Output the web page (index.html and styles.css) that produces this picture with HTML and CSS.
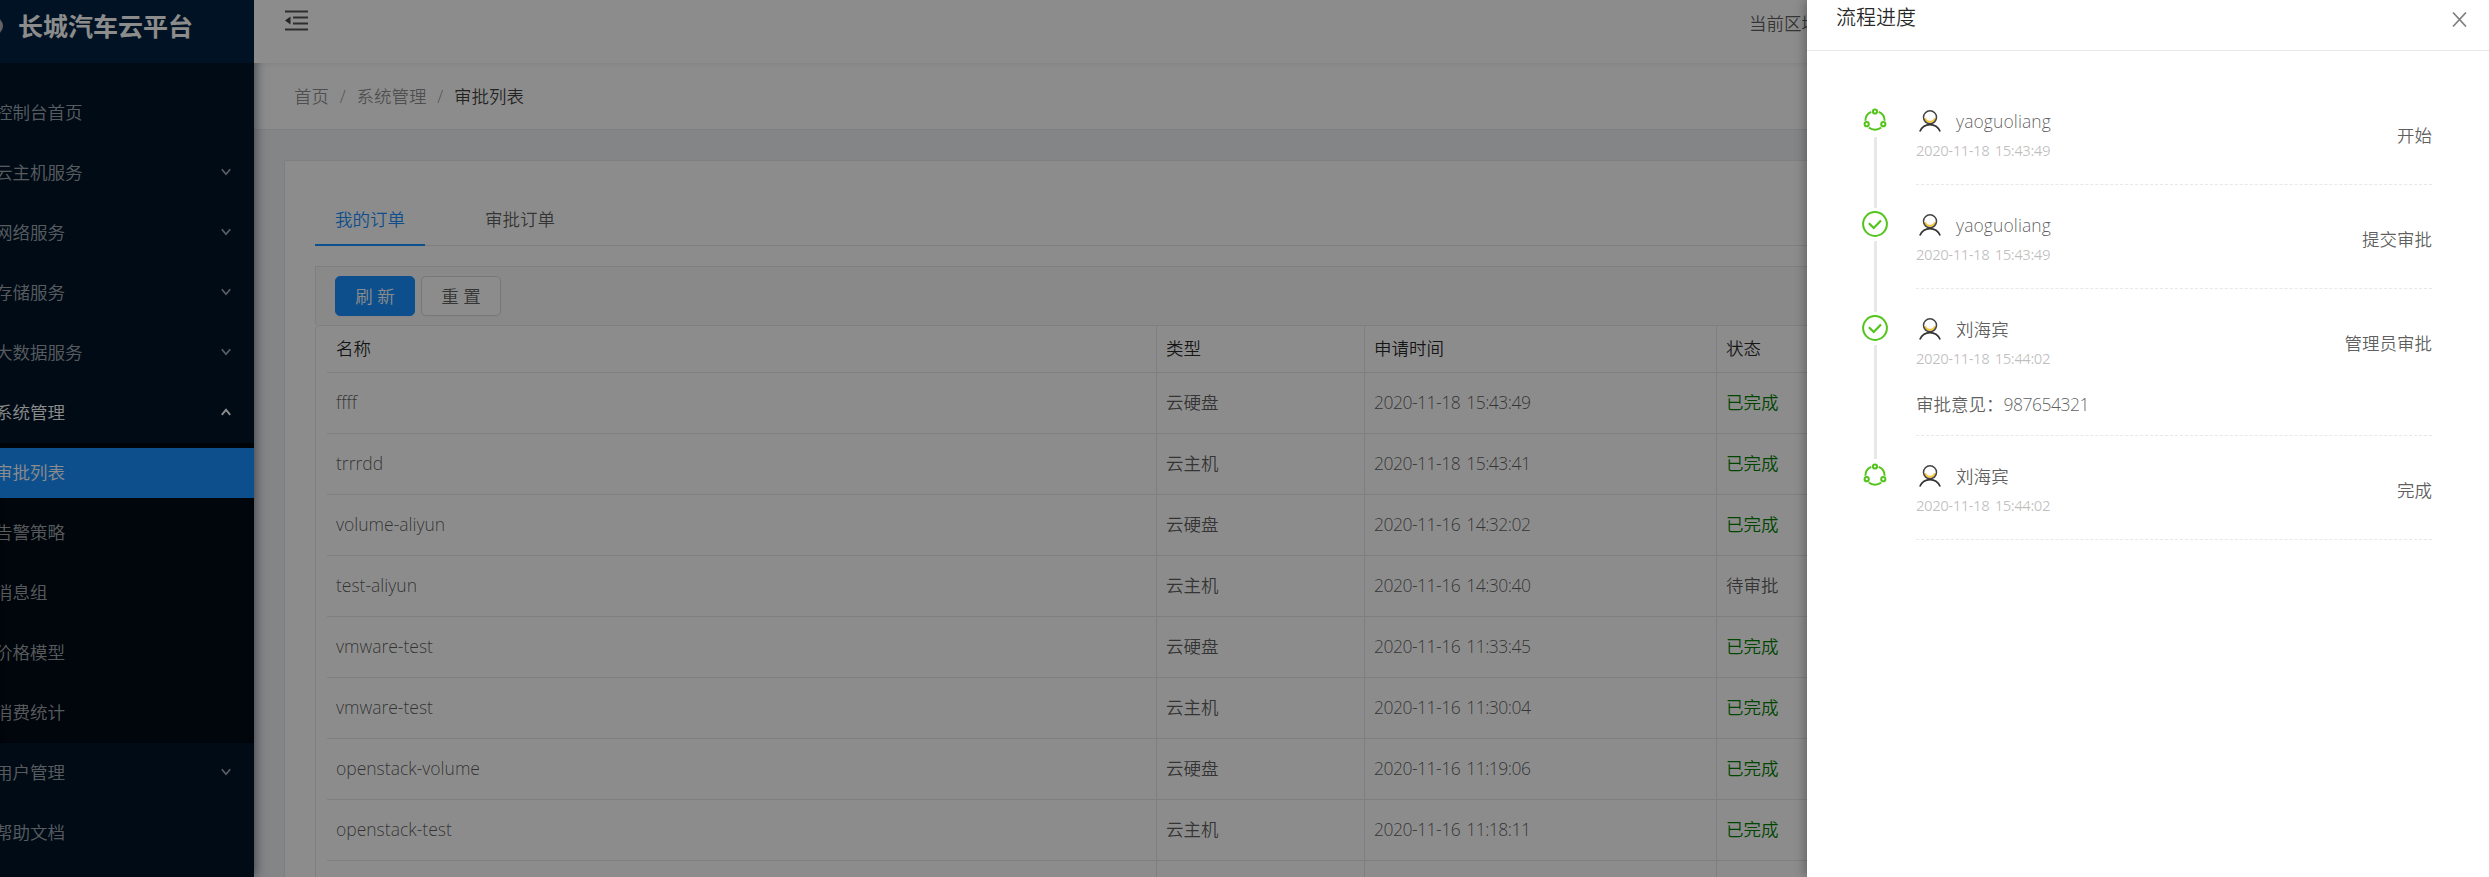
FILE: index.html
```html
<!DOCTYPE html>
<html lang="zh-CN">
<head>
<meta charset="utf-8">
<title>审批列表</title>
<link rel="stylesheet" href="styles.css">
</head>
<body>
<svg class="defs" width="0" height="0" aria-hidden="true">
  <symbol id="down" viewBox="0 0 10 8"><path d="M.8 1.200 5 6.200l4.200-5" fill="none" stroke="currentColor" stroke-width="1.700"/></symbol>
  <symbol id="up" viewBox="0 0 10 8"><path d="M.8 6.800 5 1.800l4.200 5" fill="none" stroke="currentColor" stroke-width="1.900"/></symbol>
  <symbol id="node" viewBox="0 0 26 26">
    <g fill="none" stroke="#52c41a" stroke-width="2"><path d="M9.300 4.900A9.600 9.600 0 0 0 3.400 13.700M16.700 4.900A9.600 9.600 0 0 1 22.600 13.700M6.800 20.600a9.800 9.800 0 0 0 12.400 0"/><circle cx="13" cy="4.500" r="2.100"/><circle cx="4.700" cy="17.200" r="2.100"/><circle cx="21.300" cy="17.200" r="2.100"/></g>
  </symbol>
  <symbol id="check" viewBox="0 0 26 26">
    <g fill="none" stroke="#52c41a"><circle cx="13" cy="13" r="11.900" stroke-width="2"/><path d="M6.900 12.300l4.800 4.700L19 9.400" stroke-width="2.200"/></g>
  </symbol>
  <symbol id="user" viewBox="0 0 22 22">
    <g fill="none"><path d="M6.200 8.200a5 5 0 0 0 9.600 0" stroke="#fcc430" stroke-width="1.900"/><circle cx="11" cy="7.300" r="6.500" stroke="#444" stroke-width="1.500"/><path d="M.8 21.500C3 17 6.500 14.700 11 14.700S19 17 21.200 21.500" stroke="#333" stroke-width="1.700"/></g>
  </symbol>
</svg>
<div class="app">
  <aside class="sider">
    <div class="logo"><span class="logo-mark"></span><h1>长城汽车云平台</h1></div>
    <ul class="menu">
      <li class="item">控制台首页</li>
      <li class="item">云主机服务<svg class="arrow"><use href="#down"/></svg></li>
      <li class="item">网络服务<svg class="arrow"><use href="#down"/></svg></li>
      <li class="item">存储服务<svg class="arrow"><use href="#down"/></svg></li>
      <li class="item">大数据服务<svg class="arrow"><use href="#down"/></svg></li>
      <li class="item open">系统管理<svg class="arrow"><use href="#up"/></svg></li>
      <li>
        <ul class="submenu">
          <li class="item selected">审批列表</li>
          <li class="item">告警策略</li>
          <li class="item">消息组</li>
          <li class="item">价格模型</li>
          <li class="item">消费统计</li>
        </ul>
      </li>
      <li class="item">用户管理<svg class="arrow"><use href="#down"/></svg></li>
      <li class="item">帮助文档</li>
    </ul>
  </aside>
  <div class="main">
    <header class="header">
      <svg class="fold" viewBox="0 0 23 22"><path d="M0 1.500h23M8 7.500h15M8 13.500h15M0 19.500h23" stroke="#555" stroke-width="2"/><path d="M5.500 6.500v8L0 10.500z" fill="#444"/></svg>
      <span class="region">当前区域</span>
    </header>
    <nav class="crumbs"><span>首页</span><i>/</i><span>系统管理</span><i>/</i><b>审批列表</b></nav>
    <section class="card">
      <div class="tabs"><div class="tab active">我的订单</div><div class="tab">审批订单</div></div>
      <div class="toolbar"><button class="btn primary">刷 新</button><button class="btn">重 置</button></div>
      <div class="table">
        <div class="row head"><div>名称</div><div>类型</div><div>申请时间</div><div>状态</div></div>
        <div class="row"><div>ffff</div><div>云硬盘</div><div class="num">2020-11-18 15:43:49</div><div class="done">已完成</div></div>
        <div class="row"><div>trrrdd</div><div>云主机</div><div class="num">2020-11-18 15:43:41</div><div class="done">已完成</div></div>
        <div class="row"><div>volume-aliyun</div><div>云硬盘</div><div class="num">2020-11-16 14:32:02</div><div class="done">已完成</div></div>
        <div class="row"><div>test-aliyun</div><div>云主机</div><div class="num">2020-11-16 14:30:40</div><div>待审批</div></div>
        <div class="row"><div>vmware-test</div><div>云硬盘</div><div class="num">2020-11-16 11:33:45</div><div class="done">已完成</div></div>
        <div class="row"><div>vmware-test</div><div>云主机</div><div class="num">2020-11-16 11:30:04</div><div class="done">已完成</div></div>
        <div class="row"><div>openstack-volume</div><div>云硬盘</div><div class="num">2020-11-16 11:19:06</div><div class="done">已完成</div></div>
        <div class="row"><div>openstack-test</div><div>云主机</div><div class="num">2020-11-16 11:18:11</div><div class="done">已完成</div></div>
        <div class="row"><div></div><div></div><div></div><div></div></div>
      </div>
    </section>
  </div>
</div>
<div class="mask"></div>
<aside class="drawer">
  <div class="drawer-head"><h2>流程进度</h2><svg class="close" viewBox="0 0 15 15"><path d="M1 .5l13 14M14 .5 1 14.500" stroke="#808080" stroke-width="1.700"/></svg></div>
  <ol class="steps">
    <li class="step">
      <div class="rail"><svg class="dot"><use href="#node"/></svg><span class="tail"></span></div>
      <div class="body"><div class="info"><div><div class="who"><svg class="avatar"><use href="#user"/></svg><span>yaoguoliang</span></div><time>2020-11-18 15:43:49</time></div><span class="stage">开始</span></div></div>
    </li>
    <li class="step">
      <div class="rail"><svg class="dot"><use href="#check"/></svg><span class="tail"></span></div>
      <div class="body"><div class="info"><div><div class="who"><svg class="avatar"><use href="#user"/></svg><span>yaoguoliang</span></div><time>2020-11-18 15:43:49</time></div><span class="stage">提交审批</span></div></div>
    </li>
    <li class="step">
      <div class="rail"><svg class="dot"><use href="#check"/></svg><span class="tail"></span></div>
      <div class="body"><div class="info"><div><div class="who"><svg class="avatar"><use href="#user"/></svg><span class="cn">刘海宾</span></div><time>2020-11-18 15:44:02</time></div><span class="stage">管理员审批</span></div><p class="note">审批意见：<span class="num">987654321</span></p></div>
    </li>
    <li class="step">
      <div class="rail"><svg class="dot"><use href="#node"/></svg></div>
      <div class="body"><div class="info"><div><div class="who"><svg class="avatar"><use href="#user"/></svg><span class="cn">刘海宾</span></div><time>2020-11-18 15:44:02</time></div><span class="stage">完成</span></div></div>
    </li>
  </ol>
</aside>
</body>
</html>
```
FILE: styles.css
```css
* { box-sizing: border-box; margin: 0; padding: 0; }
html, body { height: 877px; overflow: hidden; }
body {
  position: relative;
  font-family: "Open Sans", "Noto Sans CJK SC", sans-serif;
  font-size: 17.5px;
  font-weight: 350;
  line-height: 26px;
  color: rgba(0, 0, 0, .65);
  background: #f0f2f5;
}
ul, ol { list-style: none; }
.defs { position: absolute; }
.app { display: flex; width: 2489px; height: 877px; overflow: hidden; }

/* sidebar */
.sider {
  flex: none;
  width: 254px;
  height: 877px;
  background: #001529;
  box-shadow: 2px 0 10px rgba(0, 21, 41, .5);
  z-index: 1;
  color: rgba(255, 255, 255, .65);
}
.logo { display: flex; align-items: center; height: 63px; padding-bottom: 11px; background: #002140; }
.logo-mark { flex: none; width: 18px; height: 18px; margin-left: -15px; border-radius: 50%; background: #b5b5b5; }
.logo h1 { margin-left: 15px; font-size: 25px; font-weight: 700; color: #fff; white-space: nowrap; line-height: 36px; }
.menu { padding-top: 20px; }
.item {
  display: flex;
  align-items: center;
  justify-content: space-between;
  height: 50px;
  margin: 5px 0 10px;
  padding: 0 23px 2px 0;
  text-indent: -5px;
  white-space: nowrap;
}
.arrow { width: 10px; height: 8px; }
.open { color: #fff; margin-bottom: 5px; }
.submenu { height: 300px; padding-top: 5px; background: #000c17; box-shadow: inset 0 2px 8px rgba(0, 0, 0, .45); margin-bottom: 5px; }
.submenu .item { margin: 0 0 10px; }
.selected { background: #1890ff; color: #fff; }

/* page column */
.main { flex: 1; min-width: 0; display: flex; flex-direction: column; }
.header {
  display: flex;
  align-items: center;
  height: 63px;
  flex: none;
  padding: 0 0 21px 31px;
  background: #fff;
  box-shadow: 0 1px 5px rgba(0, 21, 41, .08);
  position: relative;
  z-index: 2;
}
.fold { width: 23px; height: 22px; flex: none; }
.region { margin: 3px 0 0 1441px; }
.crumbs {
  display: flex;
  flex: none;
  align-items: center;
  height: 67px;
  padding: 0 0 1px 40px;
  background: #fff;
  border-bottom: 1px solid #e8e8e8;
  color: rgba(0, 0, 0, .45);
}
.crumbs i { width: 27.500px; text-align: center; font-style: normal; }
.crumbs b { font-weight: 350; color: rgba(0, 0, 0, .75); }
.card { flex: none; height: 800px; margin: 30px 0 0 30px; border: 1px solid #e8e8e8; background: #fff; padding: 30px 0 0 30px; }
.tabs { display: flex; gap: 40px; height: 55px; border-bottom: 1px solid #e8e8e8; }
.tab { width: 110px; height: 55px; padding: 15px 0 0 20px; }
.active { color: #1890ff; border-bottom: 2px solid #1890ff; }
.toolbar { display: flex; gap: 6px; height: 59px; margin-top: 20px; padding: 9px 0 0 19px; border: 1px solid #e8e8e8; border-width: 1px 0 0 1px; background: #fafafa; }
.btn { width: 80px; height: 40px; padding-bottom: 1px; border: 1px solid #d9d9d9; border-radius: 5px; background: #fff; font: inherit; color: rgba(0, 0, 0, .65); box-shadow: 0 2px 0 rgba(0, 0, 0, .015); }
.primary { border-color: #1890ff; background: #1890ff; color: #fff; }
.table { height: 600px; padding-left: 11px; border: 1px solid #e8e8e8; border-width: 1px 0 0 1px; border-radius: 5px 0 0; }
.row { display: grid; grid-template-columns: 830px 208px 352px 1fr; height: 61px; border-bottom: 1px solid #e8e8e8; }
.row > div { display: flex; align-items: center; padding: 0 0 2px 9px; border-right: 1px solid #e8e8e8; }
.head { height: 47px; color: rgba(0, 0, 0, .85); }
.num, .row > .num { letter-spacing: -.5px; word-spacing: 2px; }
.row > .done { color: green; }

/* overlay and drawer */
.mask { position: absolute; inset: 0; z-index: 5; background: rgba(0, 0, 0, .45); }
.drawer { position: absolute; top: 0; right: 0; z-index: 6; width: 682px; height: 877px; background: #fff; box-shadow: -2px 0 10px rgba(0, 0, 0, .3); }
.drawer-head { display: flex; justify-content: space-between; height: 51px; padding: 4px 22px 0 29px; border-bottom: 1px solid #e8e8e8; }
.drawer-head h2 { font-size: 20px; font-weight: 350; line-height: 28px; color: rgba(0, 0, 0, .85); }
.close { width: 15px; height: 15px; margin-top: 8px; }
.steps { padding: 30px 57px 0 55px; }
.step { display: flex; gap: 28px; }
.rail { display: flex; flex-direction: column; align-items: center; width: 26px; padding-top: 26px; }
.dot { width: 26px; height: 26px; flex: none; }
.tail { width: 3px; flex: 1; margin: 4px 0 -23px; background: #e8e8e8; }
.body { flex: 1; min-height: 104px; border-bottom: 1px dashed #e8e8e8; }
.info { display: flex; justify-content: space-between; padding-top: 27px; }
.who { display: flex; align-items: center; gap: 15px; padding-left: 3px; letter-spacing: .1px; }
.avatar { width: 22px; height: 22px; }
.step time { display: block; margin-top: 4px; font-size: 15px; line-height: 24px; color: rgba(0, 0, 0, .25); font-weight: 400; letter-spacing: -.5px; word-spacing: 2px; }
.stage { margin-top: 14px; }
.note { margin-top: 21px; }
.step:nth-child(3) .body { height: 147px; }
```
